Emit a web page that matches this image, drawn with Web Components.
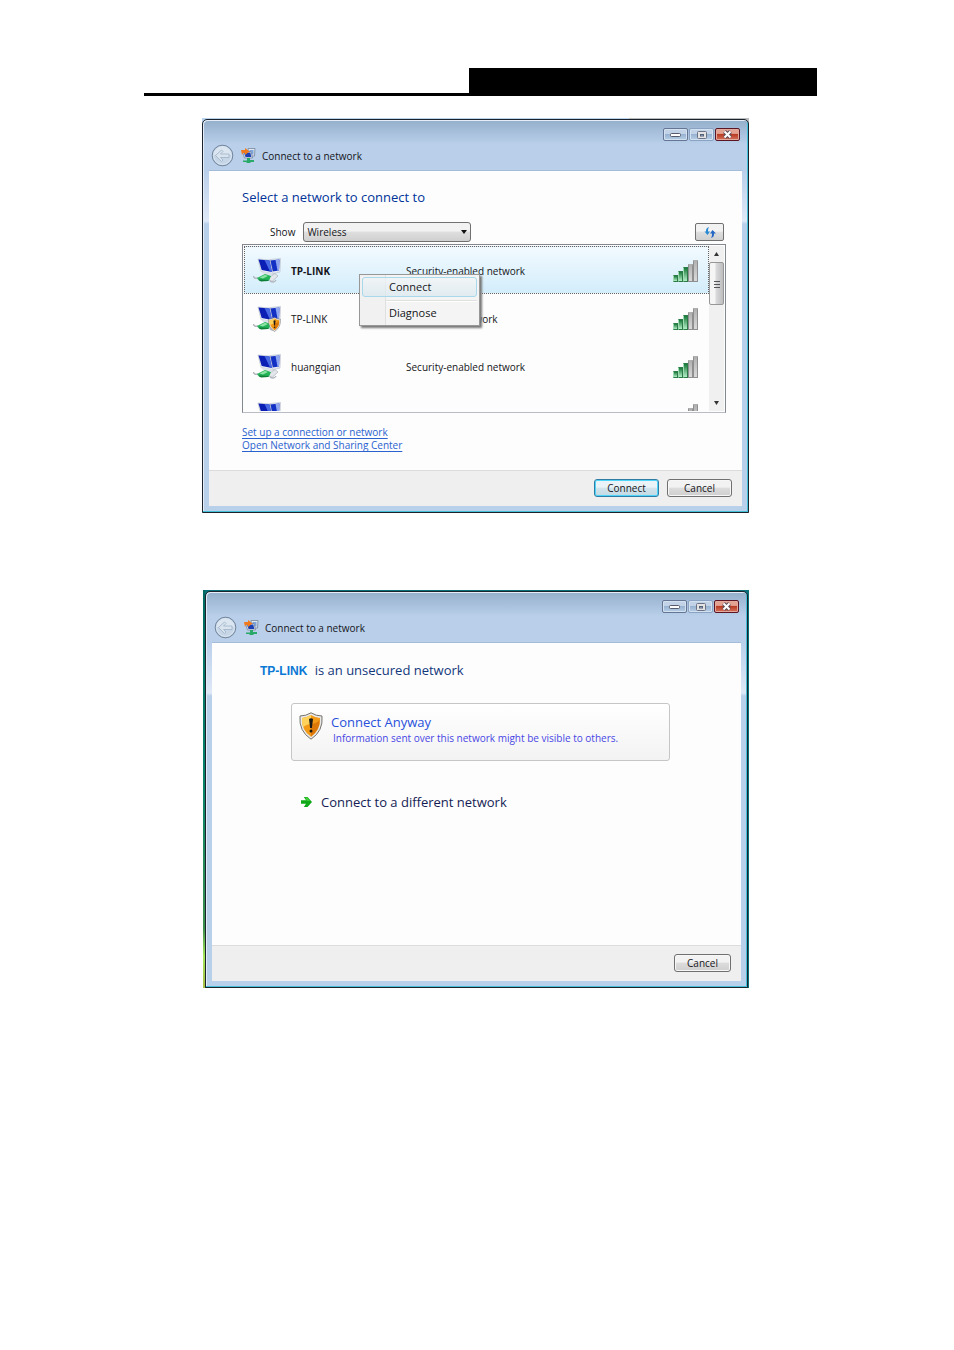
<!DOCTYPE html>
<html lang="en">
<head>
<meta charset="utf-8">
<title>Connect to a network</title>
<style>
  body {
    margin: 0;
    padding: 68px 0;
    background: #fff;
    color: #151520;
    font: 10px/14px "Open Sans", "Noto Sans", sans-serif;
  }

  page-banner {
    margin: 0 137px 22px 144px;
  }

  desktop-area {
    margin: 0 205px 77px 202px;
  }

  desktop-area + desktop-area {
    margin-left: 203px;
  }
</style>
</head>
<body>
  <page-banner></page-banner>

  <desktop-area>
    <vista-window caption="Connect to a network">
      <network-picker>
        <network-row selected secure="Security-enabled network">TP-LINK</network-row>
        <network-row shield secure="Unsecured network">TP-LINK</network-row>
        <network-row secure="Security-enabled network">huangqian</network-row>
        <network-row secure=""></network-row>
      </network-picker>
      <push-button slot="footer" primary>Connect</push-button>
      <push-button slot="footer">Cancel</push-button>
    </vista-window>
  </desktop-area>

  <desktop-area wallpaper>
    <vista-window caption="Connect to a network">
      <unsecured-notice network="TP-LINK"></unsecured-notice>
      <push-button slot="footer" narrow>Cancel</push-button>
    </vista-window>
  </desktop-area>

<script>
const computerIcon = /* html */ `
  <svg width="28" height="26" viewBox="0 0 28 26" aria-hidden="true">
    <path d="M17 1.500 L27.500 .5 L27 14 L19 16 Z" fill="#e4e9f2" stroke="#b3bccb" stroke-width=".6"/>
    <path d="M17 2.500 L26.500 1.500 L26 12.500 L19 13.500 Z" fill="#1230c4"/>
    <path d="M22.500 2 L26.500 1.500 L26 12.500 L24.500 12.700 Z" fill="#8ea6f0"/>
    <path d="M5 1 L17 2 L20 15.500 L8 13.500 Z" fill="#eef1f7" stroke="#b3bccb" stroke-width=".6"/>
    <path d="M5.500 1.500 L16.500 2.500 L19 14 L8.700 12 Z" fill="#0b1fb4"/>
    <path d="M11.500 2 L16.500 2.500 L19 14 L17 13.600 Z" fill="#4869e4"/>
    <path d="M8 13.500 L20 15.500 L21 18 L10 16 Z" fill="#dde2ea"/>
    <path d="M14 21 L22 15.500 L25 18 L19 23.500 Z" fill="#e3e6eb" stroke="#a3a9b2" stroke-width=".6"/>
    <path d="M.5 18 Q1 21 5 20 M17 23 Q21 25.500 23 22" fill="none" stroke="#b2b7be" stroke-width="1.500"/>
    <path d="M4 20 L12 16 L18 18 L16 22.500 L7 23 Z" fill="#22b357"/>
    <path d="M6.500 19.500 L12 16.800 L15 18 L10 20.500 Z" fill="#8be2a4"/>
    <path d="M4.500 21.500 L9 21.500 L16 22 L15 23 L8 23.500 Z" fill="#0d7d38"/>
  </svg>`;

const shieldShape = /* html */ `
  <path d="M12 .8 Q17 4 23 4 Q24.500 19 12 27.200 Q-.5 19 1 4 Q7 4 12 .8 Z" fill="#e9e9e9" stroke="#77736c" stroke-width="1"/>
  <path d="M12 3 Q16.500 5.800 21 6 Q21.800 18 12 24.800 Q2.200 18 3 6 Q7.500 5.800 12 3 Z" fill="#f39a17"/>
  <path d="M12 3 Q7.500 5.800 3 6 Q2.700 11 4 15 Q8 12 12 12 Z" fill="#ffd25c"/>
  <path d="M12 12 Q17 12 20.500 8 Q21 17.500 12 24.800 Z" fill="#dd7808"/>
  <path d="M10 7 Q12 5.500 14 7 L12.900 16 H11.100 Z M10.500 19 a1.500 1.500 0 1 0 3 0 a1.500 1.500 0 1 0 -3 0" fill="#1d1a16"/>`;

// Registers an element whose shadow root is built from the given markup.
function define(tagName, markup, ready) {
  const template = document.createElement('template');
  template.innerHTML = markup;

  customElements.define(tagName, class extends HTMLElement {
    constructor() {
      super();
      this.attachShadow({ mode: 'open' }).appendChild(template.content.cloneNode(true));
      if (ready) ready(this, this.shadowRoot);
    }
  });
}

define('page-banner', /* html */ `
  <style>
    :host {
      display: flex;
      justify-content: flex-end;
      border-bottom: 3px solid #000;
    }

    div {
      width: 348px;
      height: 25px;
      background: #000;
    }
  </style>
  <div></div>
`);

define('desktop-area', /* html */ `
  <style>
    :host {
      display: block;
      padding-top: 1px;
      background: linear-gradient(90deg, #b9d3ee 78%, #bbb 78%);
    }

    :host([wallpaper]) {
      padding: 1px 1px 0 2px;
      background: linear-gradient(#006a62 0%, #08846a 50%, #3c8f4c 85%, #a5e85a 92%, #a8bd45 100%) left / 2px 100% no-repeat, #087078;
    }
  </style>
  <slot></slot>
`);

define('vista-window', /* html */ `
  <style>
    :host {
      display: flex;
      flex-direction: column;
      border: 1px solid #1b242c;
      border-radius: 5px 5px 0 0;
      padding: 0 6px 6px;
      background:
        linear-gradient(#94afcb, #b9cfea 24px, #b9cfea 50px, #dfe9f7 101px, #b8d0ea 104px);
      box-shadow: inset -1px -1px #44bfd8, inset 1px 1px #e5eef8;
    }

    .controls {
      display: flex;
      justify-content: flex-end;
      gap: 1px;
      padding: 8px 2px 0 0;
    }

    .controls button {
      display: grid;
      place-items: center;
      width: 25px;
      height: 13px;
      padding: 0;
      border: 1px solid #647693;
      border-radius: 2px;
      background: linear-gradient(#c2d3e7 45%, #98b3d1 50%, #b7cfe8);
      box-shadow: inset 0 0 0 1px #d3e1f0;
    }

    .controls button:nth-child(2) {
      border-color: #8ba3c2;
    }

    .controls .close {
      border-color: #5b1626;
      background: linear-gradient(#e4a293 40%, #b93c24 50%, #d6735c);
      box-shadow: inset 0 0 0 1px #e3a99d;
    }

    .nav {
      display: flex;
      align-items: center;
      height: 29px;
      padding-left: 2px;
    }

    .back {
      display: flex;
      padding: 0;
      border: 0;
      background: none;
    }

    .nav > svg {
      margin: 0 6px 0 7px;
    }

    .client {
      display: flex;
      flex-direction: column;
      border-top: 1px solid #a3bcd8;
      background: #fdfdfd;
    }

    .content {
      min-height: 299px;
    }

    footer {
      display: flex;
      justify-content: flex-end;
      gap: 8px;
      padding: 8px 10px 9px;
      border-top: 1px solid #dcdcdc;
      background: #efefef;
    }
  </style>

  <div class="controls">
    <button type="button" aria-label="Minimize">
      <svg width="11" height="5"><rect x=".5" y="1.500" width="10" height="3" rx="1" fill="#fff" stroke="#555b6a"/></svg>
    </button>
    <button type="button" aria-label="Maximize">
      <svg width="10" height="8"><rect x=".5" y=".5" width="9" height="7" rx="1" fill="#e3e3e3" stroke="#6c7284"/><rect x="3.500" y="3.500" width="3" height="1.500" fill="#aabfda" stroke="#56617a"/></svg>
    </button>
    <button class="close" type="button" aria-label="Close">
      <svg width="11" height="9"><path d="M2.500 1.500 L8.500 7.500 M8.500 1.500 L2.500 7.500" stroke="#5d4d59" stroke-width="4"/><path d="M2.500 1.500 L8.500 7.500 M8.500 1.500 L2.500 7.500" stroke="#fff" stroke-width="2"/></svg>
    </button>
  </div>
  <div class="nav">
    <button class="back" type="button" aria-label="Back">
      <svg width="23" height="23" viewBox="0 0 23 23">
        <circle cx="11.500" cy="11.500" r="10.300" fill="#b5c9df" stroke="#708399"/>
        <circle cx="11.500" cy="11.500" r="9" fill="#c6d6e7" stroke="#dce7f2"/>
        <path d="M3 11 A8.500 8.500 0 0 1 20 11 Q12 9 3 11 Z" fill="#dce6f0"/>
        <path d="M4.500 11.500 L10.500 6 L12 7.500 L9.500 10 H18 V13.500 H9.500 L12 16 L10.500 17.500 Z" fill="#d9e4ee" stroke="#9db1c6" stroke-width=".8"/>
      </svg>
    </button>
    <svg width="15" height="15" viewBox="0 0 15 15" aria-hidden="true">
      <path d="M7 .5 H14 L13.500 8 H8 Z" fill="#dfe7f0" stroke="#76869b" stroke-width=".8"/>
      <path d="M8.500 2 H12.500 V6.500 H8.500 Z" fill="#7ea4dc"/>
      <path d="M1.500 3.500 H10 L11.500 10 H3.500 Z" fill="#dfe7f0" stroke="#76869b" stroke-width=".8"/>
      <path d="M3 4.500 H9.300 L10.300 9 H4.500 Z" fill="#1b3fb5"/>
      <path d="M0 2 H4 V0 L8.500 3.500 L4 7 V5 H2 L1 7 Z" fill="#f07b1e"/>
      <path d="M6 10 H9 V12 H13 V14 H9.500 V15 H5.500 V14 H2 V12.500 H6 Z" fill="#2aa968"/>
    </svg>
    <span class="caption"></span>
  </div>
  <div class="client">
    <div class="content"><slot></slot></div>
    <footer><slot name="footer"></slot></footer>
  </div>
`, (host, root) => {
  root.querySelector('.caption').textContent = host.getAttribute('caption');
});

define('push-button', /* html */ `
  <style>
    :host {
      display: flex;
    }

    button {
      min-width: 65px;
      height: 18px;
      padding: 0 8px;
      border: 1px solid #707070;
      border-radius: 3px;
      background: linear-gradient(#f2f2f2 45%, #dcdcdc 50%, #cfcfcf);
      box-shadow: inset 0 0 0 1px #f7f7f7;
      color: inherit;
      font: inherit;
      line-height: 14px;
    }

    :host([primary]) button {
      border-color: #2f7ca5;
      background: linear-gradient(#eaf3f7 45%, #d2e4ec 50%, #c3d9e3);
      box-shadow: inset 0 0 0 1px #4fd5fa;
    }

    :host([narrow]) button {
      min-width: 57px;
    }
  </style>
  <button type="button"><slot></slot></button>
`);

define('signal-bars', /* html */ `
  <style>
    :host {
      display: flex;
      align-items: flex-end;
      height: 22px;
    }

    i {
      box-sizing: border-box;
      width: 5px;
      border: 1px solid #8f8f8f;
      border-top: 2px solid #b0b0b0;
      background: linear-gradient(#b3b3b3, #dadada);
    }

    .on {
      border: 1px solid #2c7a48;
      border-left-color: #9fdcb1;
      background: linear-gradient(#187a3a, #b5eec6);
    }

    i:nth-of-type(1) { height: 7px; }
    i:nth-of-type(2) { height: 11px; }
    i:nth-of-type(3) { height: 15px; }
    i:nth-of-type(4) { height: 18px; }
    i:nth-of-type(5) { height: 22px; }
  </style>
  <i class="on"></i><i class="on"></i><i class="on"></i><i></i><i></i>
`);

define('network-row', /* html */ `
  <style>
    :host {
      box-sizing: border-box;
      display: grid;
      grid-template-columns: 28px 105px 1fr auto;
      align-items: center;
      column-gap: 10px;
      height: 48px;
      padding: 1px 10px 0 8px;
      border: 1px solid transparent;
    }

    :host([selected]) {
      border: 1px dotted #67625f;
      background: linear-gradient(#f2faff, #d3edfb);
    }

    :host([selected]) .name {
      font-weight: bold;
    }

    .icon {
      display: grid;
    }

    .icon > * {
      grid-area: 1 / 1;
    }

    .shield {
      display: none;
      place-self: end;
    }

    :host([shield]) .shield {
      display: block;
    }
  </style>
  <span class="icon">
    ${computerIcon}
    <svg class="shield" width="13" height="15" viewBox="0 0 24 28" aria-hidden="true">${shieldShape}</svg>
  </span>
  <span class="name"><slot></slot></span>
  <span class="secure"></span>
  <signal-bars></signal-bars>
`, (host, root) => {
  host.setAttribute('role', 'listitem');
  root.querySelector('.secure').textContent = host.getAttribute('secure');
});

define('scroll-bar', /* html */ `
  <style>
    :host {
      display: flex;
      flex-direction: column;
      width: 15px;
      background: #f0f0f0;
    }

    button {
      display: grid;
      place-items: center;
      height: 16px;
      padding: 0;
      border: 0;
      background: none;
    }

    .track {
      flex: 1;
    }

    .thumb {
      box-sizing: border-box;
      display: grid;
      place-items: center;
      height: 43px;
      border: 1px solid #979797;
      border-radius: 2px;
      background: linear-gradient(90deg, #f5f5f5 35%, #d8d8da 50%, #bdbdc0);
    }
  </style>
  <button type="button" aria-label="Scroll up"><svg width="5" height="4"><path d="M0 4 L2.500 0 L5 4 Z" fill="#333"/></svg></button>
  <div class="track">
    <div class="thumb"><svg width="6" height="8"><path d="M0 1.500 H6 M0 4.500 H6 M0 7.500 H6" stroke="#555"/></svg></div>
  </div>
  <button type="button" aria-label="Scroll down"><svg width="5" height="4"><path d="M0 0 H5 L2.500 4 Z" fill="#333"/></svg></button>
`);

define('context-menu', /* html */ `
  <style>
    :host {
      box-sizing: border-box;
      display: flex;
      flex-direction: column;
      width: 121px;
      padding: 2px;
      border: 1px solid #979797;
      background: linear-gradient(90deg, #f1f1f1 25px, #e0e0e0 25px, #e0e0e0 26px, #f4f4f4 26px);
      box-shadow: 2px 2px 2px #777;
    }

    button {
      height: 20px;
      padding: 0 0 0 26px;
      border: 1px solid transparent;
      border-radius: 3px;
      background: none;
      color: inherit;
      font: inherit;
      font-size: 11px;
      text-align: left;
    }

    .hot {
      border-color: #a8d8eb;
      background: linear-gradient(#f0f5f7aa, #d7e8efaa);
    }

    hr {
      align-self: stretch;
      height: 1px;
      margin: 3px 0 1px 24px;
      border: 0;
      border-top: 1px solid #e0e0e0;
      background: #fff;
    }
  </style>
  <button class="hot" type="button" role="menuitem">Connect</button>
  <hr>
  <button type="button" role="menuitem">Diagnose</button>
`, (host) => host.setAttribute('role', 'menu'));

define('network-picker', /* html */ `
  <style>
    :host {
      display: block;
      padding: 16px 16px 16px 33px;
    }

    h1 {
      margin: 0 0 15px;
      color: #003399;
      font-size: 13px;
      font-weight: normal;
      line-height: 20px;
    }

    .filter {
      display: flex;
      align-items: center;
      margin: 0 2px 2px 28px;
    }

    .combo {
      display: grid;
      align-items: center;
      width: 168px;
      margin-left: 8px;
    }

    .combo > * {
      grid-area: 1 / 1;
    }

    .combo svg {
      justify-self: end;
      margin-right: 4px;
      pointer-events: none;
    }

    select {
      appearance: none;
      box-sizing: border-box;
      height: 20px;
      padding: 0 3px;
      border: 1px solid #707070;
      border-radius: 3px;
      background: linear-gradient(#f2f2f2 45%, #dedede 50%, #d0d0d0);
      color: inherit;
      font: inherit;
    }

    .refresh {
      display: grid;
      place-items: center;
      width: 29px;
      height: 18px;
      margin-left: auto;
      padding: 0;
      border: 1px solid #707070;
      border-radius: 2px;
      background: linear-gradient(#f2f2f2 45%, #dedede 50%, #d0d0d0);
    }

    .list {
      position: relative;
      box-sizing: border-box;
      display: flex;
      height: 169px;
      padding: 1px;
      border: 1px solid #828790;
      border-bottom-color: #b9bcc4;
      overflow: hidden;
    }

    .rows {
      flex: 1;
      height: 165px;
      overflow: hidden;
    }

    context-menu {
      position: absolute;
      left: 116px;
      top: 29px;
    }

    nav {
      display: flex;
      flex-direction: column;
      align-items: flex-start;
      margin-top: 13px;
      line-height: 13px;
    }

    a {
      color: #2a62d0;
      text-underline-offset: 2px;
    }
  </style>

  <h1>Select a network to connect to</h1>
  <div class="filter">
    <label for="show">Show</label>
    <span class="combo">
      <select id="show"><option>Wireless</option></select>
      <svg width="6" height="4"><path d="M0 0 H6 L3 4 Z" fill="#111"/></svg>
    </span>
    <button class="refresh" type="button" aria-label="Refresh">
      <svg width="12" height="11" viewBox="0 0 12 11">
        <path d="M5 0 Q1.500 1 2 4.500 H.5 L3.500 8 L6 4.500 H4 Q3.700 2 5 0 Z" fill="#2a8ad4"/>
        <path d="M7 11 Q10.500 10 10 6.500 H12 L8.500 3 L6 6.500 H8 Q8.300 9 7 11 Z" fill="#2467c4"/>
      </svg>
    </button>
  </div>
  <div class="list">
    <div class="rows" role="list"><slot></slot></div>
    <scroll-bar></scroll-bar>
    <context-menu></context-menu>
  </div>
  <nav>
    <a href="#setup">Set up a connection or network</a>
    <a href="#sharing">Open Network and Sharing Center</a>
  </nav>
`);

define('unsecured-notice', /* html */ `
  <style>
    :host {
      box-sizing: border-box;
      display: block;
      min-height: 302px;
      padding: 17px 71px 16px 48px;
      font-size: 13px;
      line-height: 20px;
    }

    h1 {
      margin: 0 0 22px;
      color: #12387c;
      font-size: inherit;
      font-weight: normal;
    }

    h1 b {
      margin-right: 4px;
      color: #0a78d4;
      font: bold 12px/20px "Liberation Sans", Arial, sans-serif;
    }

    button {
      display: flex;
      gap: 8px;
      border: 0;
      background: none;
      color: inherit;
      font: inherit;
      text-align: left;
    }

    .anyway {
      box-sizing: border-box;
      width: calc(100% - 31px);
      height: 58px;
      margin-left: 31px;
      padding: 8px 7px;
      border: 1px solid #c6c6c6;
      border-radius: 3px;
      background: linear-gradient(#fff, #f3f3f3);
      color: #2850dc;
    }

    .anyway span {
      display: flex;
      flex-direction: column;
    }

    small {
      padding-left: 2px;
      color: #4846e4;
      font-size: 10px;
      line-height: 13px;
    }

    .other {
      align-items: center;
      margin: 31px 0 0 40px;
      padding: 0;
      color: #151c55;
    }
  </style>

  <h1><b></b> is an unsecured network</h1>
  <button class="anyway" type="button">
    <svg width="24" height="28" viewBox="0 0 24 28" aria-hidden="true">${shieldShape}</svg>
    <span>Connect Anyway<small>Information sent over this network might be visible to others.</small></span>
  </button>
  <button class="other" type="button">
    <svg width="13" height="12" viewBox="0 0 13 12" aria-hidden="true"><path d="M1 4.200 H6 L3.800 1 H7.500 L12 6 L7.500 11 H3.800 L6 7.700 H1 Z" fill="#10a818"/><path d="M1.500 4.700 H7 L5 1.500 H7.200 L10 5 Z" fill="#45cf3c"/></svg>
    Connect to a different network
  </button>
`, (host, root) => {
  root.querySelector('b').textContent = host.getAttribute('network');
});
</script>
</body>
</html>
